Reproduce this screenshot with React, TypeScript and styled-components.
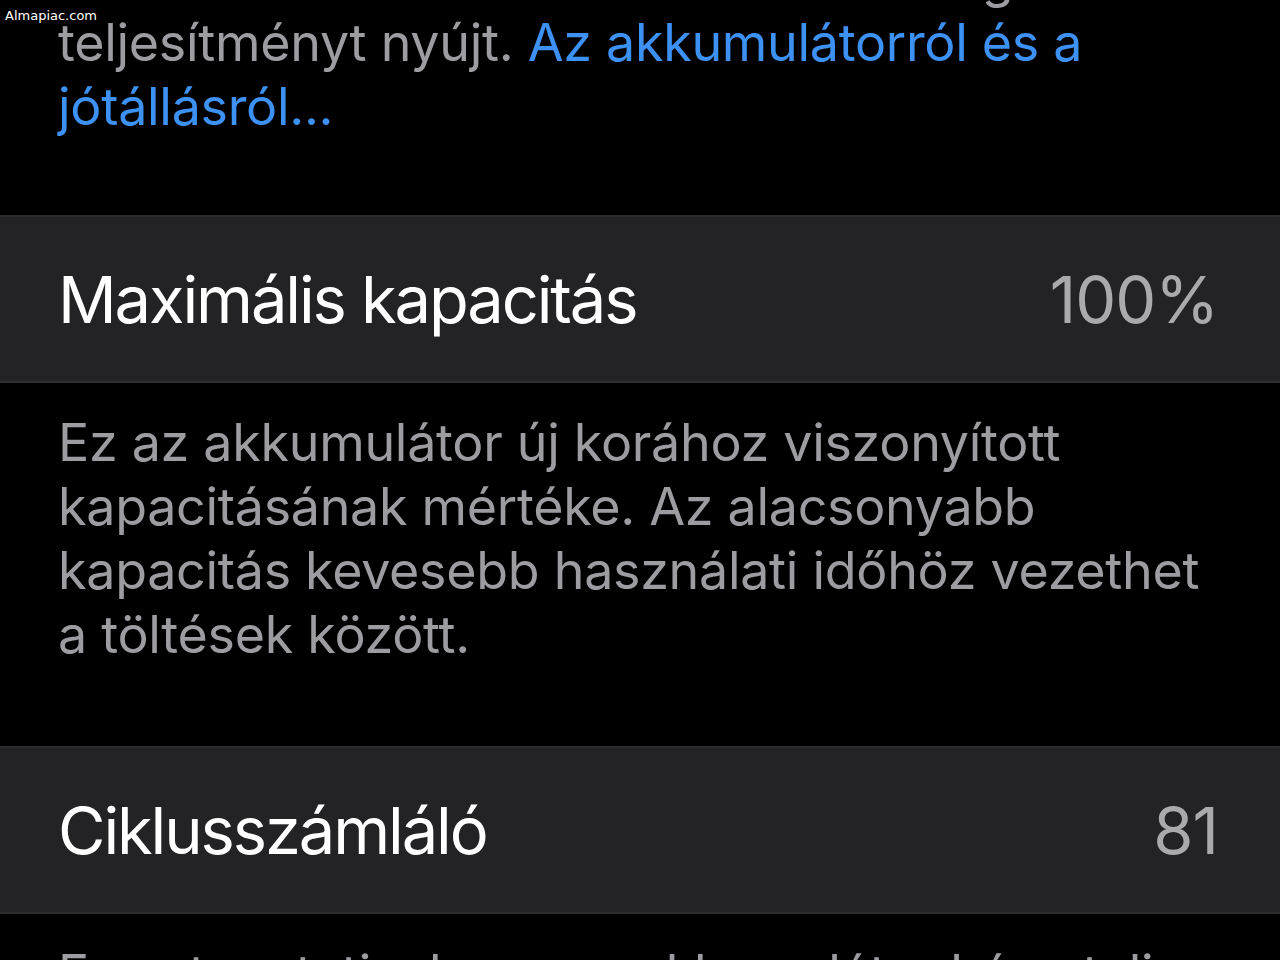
import React from 'react';
import styled, { createGlobalStyle } from 'styled-components';

const GlobalStyle = createGlobalStyle`
  html, body {
    margin: 0;
    padding: 0;
    background: #000000;
  }
`;

const Screen = styled.div`
  position: relative;
  width: 1280px;
  height: 960px;
  overflow: hidden;
  background: #000000;
  font-family: Inter, 'Liberation Sans', sans-serif;
`;

const Scroll = styled.div`
  display: flex;
  flex-direction: column;
  margin-top: -53px;
`;

interface FootnoteProps {
  padTop?: number;
  padBottom?: number;
}

const Footnote = styled.p<FootnoteProps>`
  margin: 0;
  padding: ${(p) => p.padTop ?? 28}px 60px ${(p) => p.padBottom ?? 79}px 58px;
  font-size: 52px;
  line-height: 64px;
  color: #9c9ca1;
  letter-spacing: -0.3px;
`;

const Line = styled.span`
  white-space: nowrap;
`;

const Link = styled.span`
  color: #3c91f2;
`;

const Cell = styled.div`
  display: flex;
  align-items: center;
  justify-content: space-between;
  height: 164px;
  padding: 0 62px 0 58px;
  background: #232325;
  border-top: 2px solid #2c2c2e;
  border-bottom: 2px solid #2e2e30;
`;

const CellTitle = styled.span`
  font-size: 65px;
  color: #ffffff;
  letter-spacing: -2.1px;
`;

const CellValue = styled.span`
  font-size: 65px;
  color: #a9a9ae;
  letter-spacing: -1px;
`;

const Watermark = styled.div`
  position: absolute;
  top: 8px;
  left: 5px;
  font-family: 'DejaVu Sans', sans-serif;
  font-size: 13px;
  color: #ffffff;
`;

export default function App() {
  return (
    <Screen>
      <GlobalStyle />
      <Scroll>
        <Footnote padTop={0} padBottom={76}>
          <Line>Az akkumulátorok az évek során elöregednek és</Line>
          <br />
          teljesítményt nyújt. <Link>Az akkumulátorról és a jótállásról...</Link>
        </Footnote>
        <Cell>
          <CellTitle>Maximális kapacitás</CellTitle>
          <CellValue>100%</CellValue>
        </Cell>
        <Footnote>
          Ez az akkumulátor új korához viszonyított kapacitásának mértéke. Az
          alacsonyabb kapacitás kevesebb használati időhöz vezethet a töltések
          között.
        </Footnote>
        <Cell>
          <CellTitle>Ciklusszámláló</CellTitle>
          <CellValue>81</CellValue>
        </Cell>
        <Footnote>
          Ez azt mutatja, hogy az akkumulátor hány teljes töltési ciklust
          teljesített eddig.
        </Footnote>
      </Scroll>
      <Watermark>Almapiac.com</Watermark>
    </Screen>
  );
}
